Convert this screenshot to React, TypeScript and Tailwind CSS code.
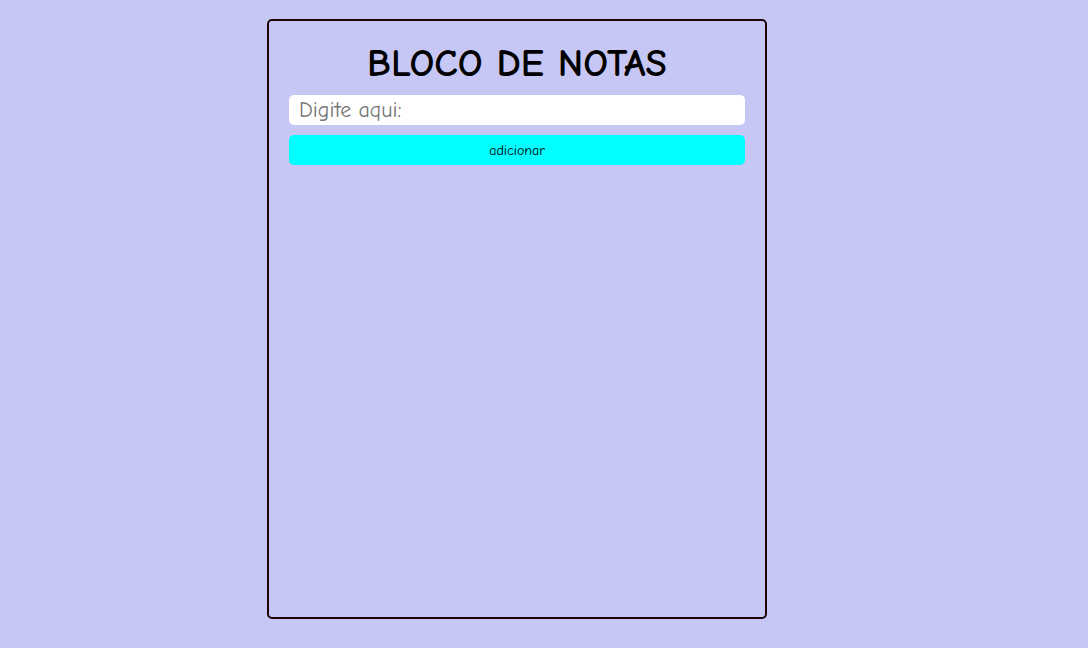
import React from 'react';

const App: React.FC = () => {
  return (
    <div
      className="min-h-[648px] w-full bg-[#c7c7f5] pt-[19px] pl-[267px]"
      style={{ fontFamily: '"Comic Sans MS", "Comic Neue", "DejaVu Sans", sans-serif' }}
    >
      <div className="w-[500px] h-[600px] border-2 border-[#1a0505] rounded-[5px] px-5 pt-5 flex flex-col gap-[10px]">
        <h1 className="h-[44px] text-center text-[39px] leading-[46px] font-bold text-black">
          BLOCO DE NOTAS
        </h1>
        <input
          type="text"
          placeholder="Digite aqui:"
          className="h-[30px] w-full bg-white rounded-[5px] px-[10px] text-[22px] text-black placeholder:text-[#757575] outline-none"
        />
        <button className="h-[30px] w-full bg-[#00ffff] rounded-[5px] text-[14px] text-black">
          adicionar
        </button>
      </div>
    </div>
  );
};

export default App;
